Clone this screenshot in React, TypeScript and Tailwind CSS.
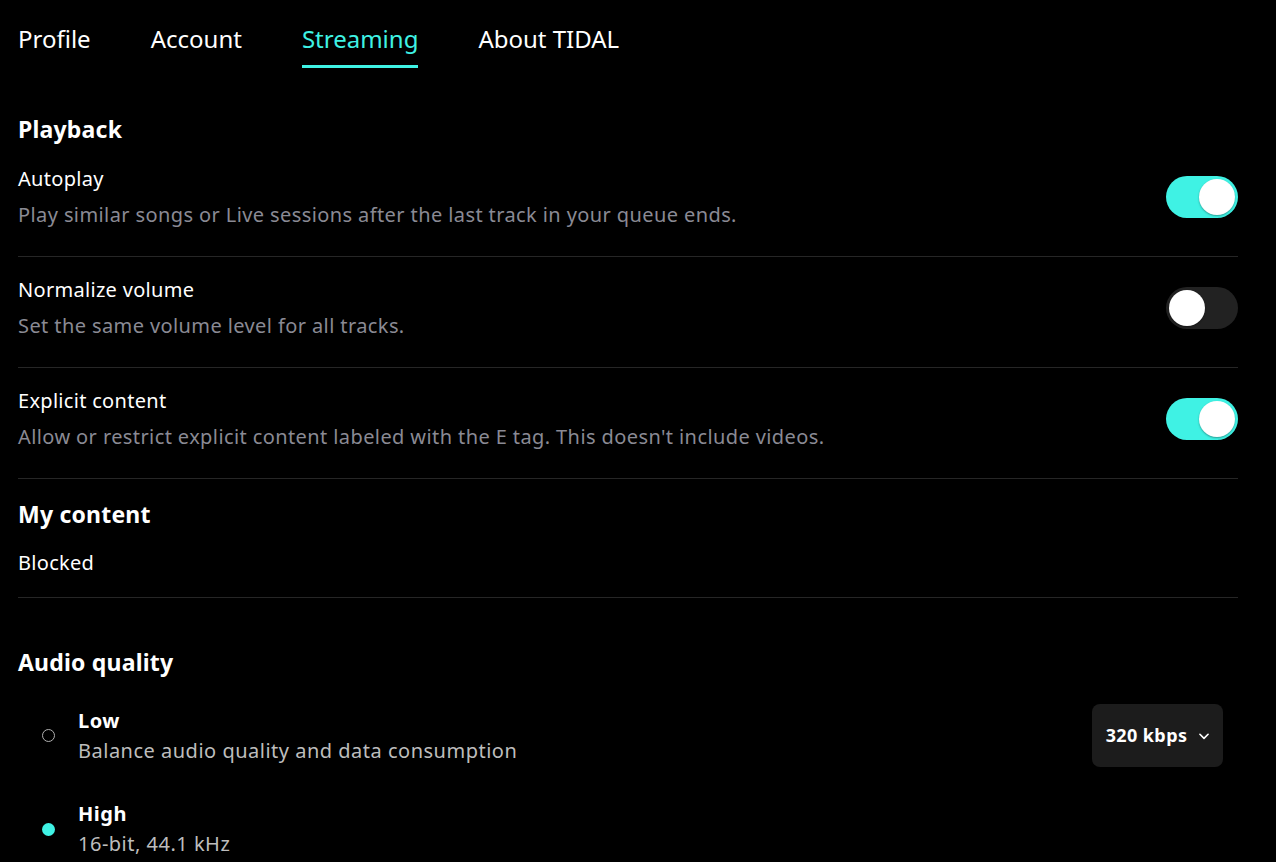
import React from "react";

const tabs = ["Profile", "Account", "Streaming", "About TIDAL"];

const playback = [
  {
    title: "Autoplay",
    description: "Play similar songs or Live sessions after the last track in your queue ends.",
    on: true,
  },
  {
    title: "Normalize volume",
    description: "Set the same volume level for all tracks.",
    on: false,
  },
  {
    title: "Explicit content",
    description: "Allow or restrict explicit content labeled with the E tag. This doesn't include videos.",
    on: true,
  },
];

const Toggle = ({ on }: { on: boolean }) => (
  <div
    className={
      on
        ? "w-[72px] h-[42px] rounded-full bg-[#3ff2e4] flex items-center justify-end px-[3px] shrink-0"
        : "w-[72px] h-[42px] rounded-full bg-[#222222] flex items-center justify-start px-[3px] shrink-0"
    }
  >
    <div className="w-[36px] h-[36px] rounded-full bg-white shadow-[0_1px_2px_rgba(0,0,0,0.35)]" />
  </div>
);

export default function App() {
  return (
    <div
      className="min-h-[862px] bg-black text-white pl-[18px] pr-[38px] overflow-hidden"
      style={{ fontFamily: '"Noto Sans", "Open Sans", sans-serif' }}
    >
      <nav className="flex gap-[60px] pt-[24px]">
        {tabs.map((t) => (
          <div
            key={t}
            className={
              t === "Streaming"
                ? "text-[24px] leading-[30px] pb-[11px] border-b-[3px] border-[#3ff2e4] text-[#3ff2e4]"
                : "text-[24px] leading-[30px] pb-[11px] border-b-[3px] border-transparent"
            }
          >
            {t}
          </div>
        ))}
      </nav>

      <h2 className="mt-[46px] text-[23px] leading-[30px] font-bold tracking-[0.2px]">Playback</h2>
      <div className="mt-[2px]">
        {playback.map((row) => (
          <div key={row.title} className="flex items-center justify-between border-b border-[#262626] pt-[20px] pb-[28px]">
            <div className="flex flex-col gap-[10px]">
              <div className="text-[20px] leading-[26px] tracking-[0.3px]">{row.title}</div>
              <div className="text-[20px] leading-[26px] tracking-[0.4px] text-[#8a8a94]">{row.description}</div>
            </div>
            <Toggle on={row.on} />
          </div>
        ))}
      </div>

      <h2 className="mt-[20px] text-[23px] leading-[30px] font-bold tracking-[0.2px]">My content</h2>
      <div className="mt-[21px] pb-[21px] border-b border-[#262626] text-[20px] leading-[26px] tracking-[0.3px]">Blocked</div>

      <h2 className="mt-[49px] text-[23px] leading-[30px] font-bold tracking-[0.2px]">Audio quality</h2>
      <div className="mt-[27px] flex flex-col gap-[35px] pl-[24px]">
        <div className="flex items-center justify-between pr-[15px]">
          <div className="flex items-center gap-[23px]">
            <div className="w-[13px] h-[13px] rounded-full border border-[#b0b0b0]" />
            <div className="flex flex-col gap-[6px]">
              <div className="text-[20px] leading-[24px] font-bold tracking-[0.5px]">Low</div>
              <div className="text-[20px] leading-[24px] tracking-[0.5px] text-[#bdbdbd]">Balance audio quality and data consumption</div>
            </div>
          </div>
          <button className="h-[63px] w-[131px] rounded-lg bg-[#1c1c1c] flex items-center justify-center gap-[10px] text-[18px] font-bold tracking-[0.4px] text-white pl-[2px]">
            320 kbps
            <svg width="14" height="14" viewBox="0 0 24 24" fill="none" stroke="currentColor" strokeWidth="2.8" strokeLinecap="round" strokeLinejoin="round">
              <path d="M5 9l7 7 7-7" />
            </svg>
          </button>
        </div>
        <div className="flex items-center gap-[23px]">
          <div className="w-[13px] h-[13px] rounded-full bg-[#3ff2e4]" />
          <div className="flex flex-col gap-[6px]">
            <div className="text-[20px] leading-[24px] font-bold tracking-[0.5px]">High</div>
            <div className="text-[20px] leading-[24px] tracking-[0.5px] text-[#bdbdbd]">16-bit, 44.1 kHz</div>
          </div>
        </div>
      </div>
    </div>
  );
}
